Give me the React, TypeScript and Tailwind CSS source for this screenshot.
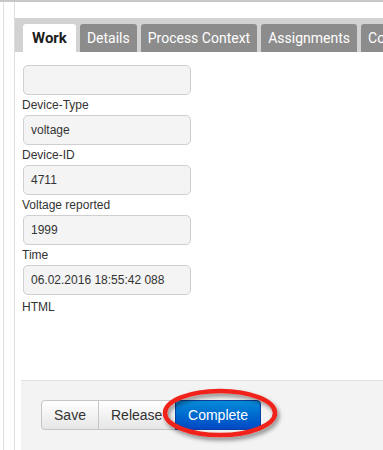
import React from 'react';

const tabs = ['Work', 'Details', 'Process Context', 'Assignments', 'Comments'];

const fields: { label?: string; value: string }[] = [
  { value: '' },
  { label: 'Device-Type', value: 'voltage' },
  { label: 'Device-ID', value: '4711' },
  { label: 'Voltage reported', value: '1999' },
  { label: 'Time', value: '06.02.2016 18:55:42 088' },
];

export default function App() {
  return (
    <div className="w-[383px] h-[450px] overflow-hidden bg-white border-t-2 border-[#c8c8c8] pl-[3px] flex font-['Liberation_Sans',Arial,sans-serif]">
      <div className="border-l border-[#dedede] pl-[10px] flex-1 flex min-w-0">
        <div className="border-l border-[#dedede] flex-1 flex flex-col min-w-0 pt-4">
          {/* Tabs */}
          <div className="bg-[#d2d2d2] h-[34px] pl-2 pt-[6px] flex gap-[4px] items-end whitespace-nowrap overflow-hidden font-['Roboto',sans-serif]">
            {tabs.map((t, i) =>
              i === 0 ? (
                <div key={t} className="h-[28px] px-[9px] bg-white rounded-t-[3px] flex items-center text-[15px] font-bold text-[#1d1d1d]">
                  {t}
                </div>
              ) : (
                <div key={t} className="h-[28px] px-[7px] bg-[#8c8c8c] rounded-t-[3px] flex items-center text-[14px] text-white">
                  {t}
                </div>
              )
            )}
          </div>

          {/* Form */}
          <div className="flex-1 pl-2 pt-[13px] flex flex-col">
            {fields.map((f, i) => (
              <div key={i} className="flex flex-col">
                {f.label && <div className="h-[20px] -ml-[1px] flex items-center text-[12px] text-[#333]">{f.label}</div>}
                <div className="w-[168px] h-[30px] rounded-[5px] border border-[#cfcfcf] bg-[#f4f4f4] px-[7px] flex items-center text-[12px] text-[#333]">
                  {f.value}
                </div>
              </div>
            ))}
            <div className="h-[24px] -ml-[1px] flex items-center text-[12px] text-[#333]">HTML</div>
          </div>

          {/* Footer */}
          <div className="ml-[6px] h-[70px] bg-[#f3f3f3] border-t border-[#e2e2e2] pl-[20px] pt-[19px]">
            <div className="relative flex">
              <button className="h-[30px] w-[58px] rounded-l-[4px] border border-[#c5c5c5] bg-gradient-to-b from-white to-[#e6e6e6] text-[14px] text-[#333]">
                Save
              </button>
              <button className="h-[30px] w-[80px] -ml-px border border-[#c5c5c5] bg-gradient-to-b from-white to-[#e6e6e6] text-[14px] text-[#333] text-left pl-[12px]">
                Release
              </button>
              <button className="h-[30px] w-[86px] -ml-[3px] rounded-r-[4px] border border-[#0a3f9c] bg-gradient-to-b from-[#0a8ad8] to-[#0447c4] text-[14px] text-white">
                Complete
              </button>
              <svg className="absolute left-[121px] top-[-12px] overflow-visible" width="116" height="50" viewBox="0 0 116 50">
                <defs>
                  <filter id="sh" x="-20%" y="-30%" width="140%" height="160%">
                    <feDropShadow dx="2" dy="3" stdDeviation="2" floodColor="#000" floodOpacity="0.45" />
                  </filter>
                </defs>
                <ellipse cx="58" cy="25" rx="55" ry="22" fill="none" stroke="#f0241a" strokeWidth="4.5" filter="url(#sh)" />
              </svg>
            </div>
          </div>
        </div>
      </div>
    </div>
  );
}
